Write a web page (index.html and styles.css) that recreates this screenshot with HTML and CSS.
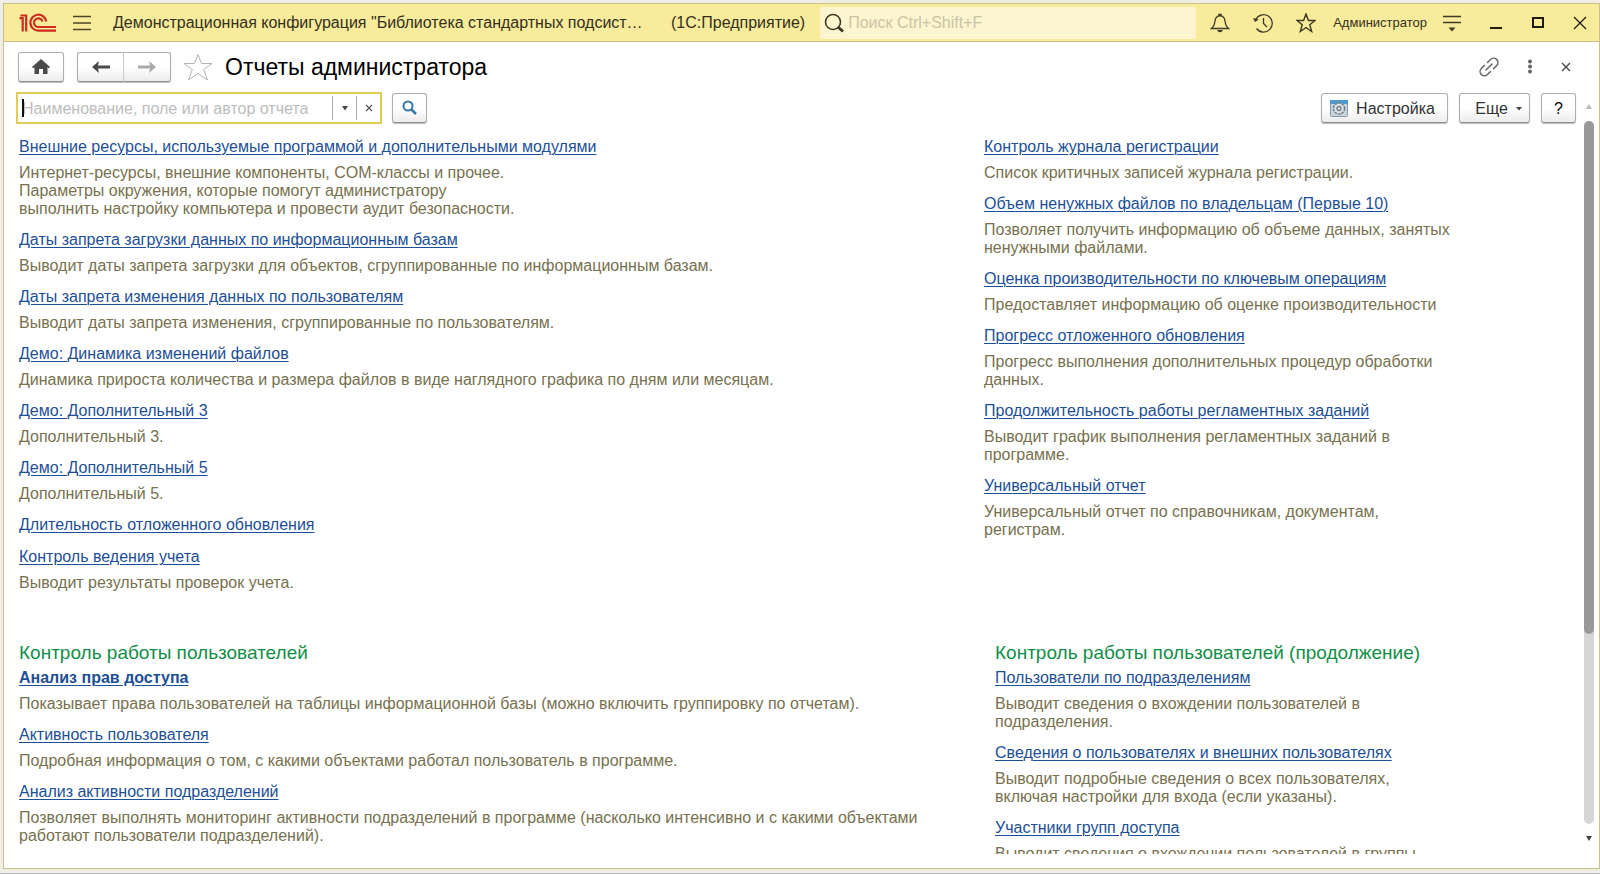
FILE: index.html
```html
<!DOCTYPE html>
<html lang="ru">
<head>
<meta charset="utf-8">
<title>Отчеты администратора</title>
<link rel="stylesheet" href="styles.css">
</head>
<body>
<div class="window">
  <header class="titlebar">
    <svg class="logo" width="38" height="20" viewBox="0 0 38 20" role="img" aria-label="1С" fill="none" stroke="#cb2d21" stroke-width="2.200">
      <path d="M.5 5.200H3.700V18.500M1.500 2.500H7.200V18.500" />
      <path d="M27.300 8.500A8 8 0 1 0 19.500 17.700H37"/>
      <path d="M23.500 8.500A4.300 4.300 0 1 0 19.500 14H37"/>
    </svg>
    <button class="icon-btn menu" aria-label="Меню"><svg width="18" height="16" viewBox="0 0 18 16" stroke="#4c4626" stroke-width="1.500"><path d="M0 1.500H18M0 8H18M0 14.500H18"/></svg></button>
    <span class="app-name">Демонстрационная конфигурация "Библиотека стандартных подсистем"</span>
    <span class="app-kind">(1С:Предприятие)</span>
    <label class="global-search">
      <svg width="20" height="20" viewBox="0 0 20 20" fill="none" stroke="#3d3a22"><circle cx="9" cy="9" r="7.500" stroke-width="1.600"/><path d="M14 14 19 18.500" stroke-width="3"/></svg>
      <input type="search" placeholder="Поиск Ctrl+Shift+F" aria-label="Поиск">
    </label>
    <nav class="tools">
      <button class="icon-btn" aria-label="Уведомления"><svg width="20" height="20" viewBox="0 0 20 20" fill="none" stroke="#3d3a22" stroke-width="1.300"><path d="M1.500 15.500C4 13.500 4.500 12 5 8C5.300 5 7 2.800 10 2.800S14.700 5 15 8C15.500 12 16 13.500 18.500 15.500ZM9 2.800V1.500H11V2.800"/><path d="M7 17H13Q12 19.300 10 19.300T7 17Z" fill="#3d3a22" stroke="none"/></svg></button>
      <button class="icon-btn" aria-label="История"><svg width="20" height="20" viewBox="0 0 20 20" fill="none" stroke="#3d3a22" stroke-width="1.300"><path d="M2.500 7A8.700 8.700 0 1 1 3.500 15.500M10.500 5V10.500L14 14"/><path d="M0 5 2 9 5.800 6.500Z" fill="#3d3a22" stroke="none"/></svg></button>
      <button class="icon-btn" aria-label="Избранное"><svg width="20" height="20" viewBox="0 0 20 20" fill="none" stroke="#3d3a22" stroke-width="1.400"><path d="M10 1 12.400 7.500H19L13.800 11.700 15.700 18.500 10 14.500 4.300 18.500 6.200 11.700 1 7.500H7.600Z"/></svg></button>
      <a class="user" href="#">Администратор</a>
      <button class="icon-btn" aria-label="Сервис"><svg width="18" height="20" viewBox="0 0 18 20" stroke="#3d3a22" stroke-width="1.500"><path d="M0 3.500H18M0 9.500H18"/><path d="M5.500 14.500H12.500L9 18.500Z" fill="#3d3a22" stroke="none"/></svg></button>
    </nav>
    <div class="win-buttons">
      <button class="icon-btn" aria-label="Свернуть"><svg width="14" height="14" viewBox="0 0 14 14" stroke="#1f1d10" stroke-width="2"><path d="M1 12H13"/></svg></button>
      <button class="icon-btn" aria-label="Развернуть"><svg width="14" height="14" viewBox="0 0 14 14" fill="none" stroke="#1f1d10" stroke-width="2"><path d="M2 2H12V11H2Z"/></svg></button>
      <button class="icon-btn" aria-label="Закрыть"><svg width="14" height="14" viewBox="0 0 14 14" stroke="#1f1d10" stroke-width="1.300"><path d="M1 1 13 13M13 1 1 13"/></svg></button>
    </div>
  </header>

  <div class="form-head">
    <button class="btn home" aria-label="Начальная страница"><svg width="18" height="16" viewBox="0 0 18 16" fill="#4a4a4a"><path d="M9 0 18 8 16.800 9.300 15.500 8.200V15H11V10H7V15H2.500V8.200L1.200 9.300 0 8Z"/></svg></button>
    <div class="nav-pair">
      <button class="btn" aria-label="Назад"><svg width="18" height="12" viewBox="0 0 18 12"><path d="M0 6 7 0 6 4.500H18V7.500H6L7 12Z" fill="#4a4a4a"/></svg></button>
      <button class="btn" aria-label="Вперед" disabled><svg width="18" height="12" viewBox="0 0 18 12"><path d="M18 6 11 0 12 4.500H0V7.500H12L11 12Z" fill="#aaa"/></svg></button>
    </div>
    <button class="icon-btn" aria-label="Добавить в избранное"><svg width="30" height="28" viewBox="0 0 30 28" fill="none" stroke="#b4b4b4"><path d="M15 1.500 18.500 10.500H29L20.700 16.500 24.500 27 15 20.500 5.500 27 9.300 16.500 1 10.500H11.500Z"/></svg></button>
    <h1>Отчеты администратора</h1>
    <div class="form-tools">
      <button class="icon-btn" aria-label="Получить ссылку"><svg width="20" height="20" viewBox="0 0 20 20" fill="none" stroke="#666" stroke-width="1.500" stroke-linecap="round"><path d="M8.500 5.500 11.500 2.500A4.200 4.200 0 0 1 17.700 8.500L14.500 11.700M11.500 14.500 8.500 17.500A4.200 4.200 0 0 1 2.300 11.500L5.500 8.300M7 13 13 7"/></svg></button>
      <button class="icon-btn" aria-label="Действия"><svg width="6" height="16" viewBox="0 0 6 16" fill="#666"><circle cx="3" cy="2.500" r="2"/><circle cx="3" cy="7.500" r="2"/><circle cx="3" cy="12.500" r="2"/></svg></button>
      <button class="icon-btn" aria-label="Закрыть форму"><svg width="10" height="10" viewBox="0 0 10 10" stroke="#444" stroke-width="1.300"><path d="M1 1 9 9M9 1 1 9"/></svg></button>
    </div>
  </div>

  <div class="body">
    <main class="form">
      <div class="commands">
        <div class="report-search">
          <input type="text" placeholder="Наименование, поле или автор отчета" aria-label="Поиск отчета" autofocus>
          <span class="caret"></span>
          <button aria-label="Выбрать из списка"><svg width="6" height="5" viewBox="0 0 6 5" fill="#444"><path d="M0 0H6L3 4.500Z"/></svg></button>
          <button aria-label="Очистить"><svg width="8" height="8" viewBox="0 0 8 8" stroke="#555" stroke-width="1.200"><path d="M1 1 7 7M7 1 1 7"/></svg></button>
        </div>
        <button class="btn find" aria-label="Найти"><svg width="16" height="16" viewBox="0 0 16 16" fill="none" stroke="#3577a8"><circle cx="6" cy="6" r="4.500" stroke-width="2"/><path d="M9.500 9.500 14 14" stroke-width="2.500"/></svg></button>
        <div class="right-commands">
          <button class="btn settings"><svg width="18" height="17" viewBox="0 0 18 17" fill="none"><rect x=".5" y=".5" width="17" height="16" rx="1" fill="#c9d3da" stroke="#8799a6"/><path d="M0 0H18V4H0Z" fill="#4f9bd0"/><circle cx="9" cy="8.500" r="5.500" fill="#dfe4e7" stroke="#6d7c87" stroke-width="1.500" stroke-dasharray="2.500 1"/><circle cx="9" cy="8.500" r="2" stroke="#6d7c87" stroke-width="1.300"/></svg>Настройка</button>
          <button class="btn more">Еще<svg width="6" height="4" viewBox="0 0 6 4" fill="#444"><path d="M0 0H6L3 3.500Z"/></svg></button>
          <button class="btn help">?</button>
        </div>
      </div>

      <div class="reports">
        <section class="group">
          <ul class="list">
            <li><a href="#">Внешние ресурсы, используемые программой и дополнительными модулями</a><p>Интернет-ресурсы, внешние компоненты, COM-классы и прочее.<br>Параметры окружения, которые помогут администратору<br>выполнить настройку компьютера и провести аудит безопасности.</p></li>
            <li><a href="#">Даты запрета загрузки данных по информационным базам</a><p>Выводит даты запрета загрузки для объектов, сгруппированные по информационным базам.</p></li>
            <li><a href="#">Даты запрета изменения данных по пользователям</a><p>Выводит даты запрета изменения, сгруппированные по пользователям.</p></li>
            <li><a href="#">Демо: Динамика изменений файлов</a><p>Динамика прироста количества и размера файлов в виде наглядного графика по дням или месяцам.</p></li>
            <li><a href="#">Демо: Дополнительный 3</a><p>Дополнительный 3.</p></li>
            <li><a href="#">Демо: Дополнительный 5</a><p>Дополнительный 5.</p></li>
            <li><a href="#">Длительность отложенного обновления</a></li>
            <li><a href="#">Контроль ведения учета</a><p>Выводит результаты проверок учета.</p></li>
          </ul>
          <ul class="list narrow">
            <li><a href="#">Контроль журнала регистрации</a><p>Список критичных записей журнала регистрации.</p></li>
            <li><a href="#">Объем ненужных файлов по владельцам (Первые 10)</a><p>Позволяет получить информацию об объеме данных, занятых ненужными файлами.</p></li>
            <li><a href="#">Оценка производительности по ключевым операциям</a><p>Предоставляет информацию об оценке производительности</p></li>
            <li><a href="#">Прогресс отложенного обновления</a><p>Прогресс выполнения дополнительных процедур обработки данных.</p></li>
            <li><a href="#">Продолжительность работы регламентных заданий</a><p>Выводит график выполнения регламентных заданий в программе.</p></li>
            <li><a href="#">Универсальный отчет</a><p>Универсальный отчет по справочникам, документам, регистрам.</p></li>
          </ul>
        </section>
        <section class="group users">
          <div>
            <h2>Контроль работы пользователей</h2>
            <ul class="list">
              <li><a class="main" href="#">Анализ прав доступа</a><p>Показывает права пользователей на таблицы информационной базы (можно включить группировку по отчетам).</p></li>
              <li><a href="#">Активность пользователя</a><p>Подробная информация о том, с какими объектами работал пользователь в программе.</p></li>
              <li><a href="#">Анализ активности подразделений</a><p>Позволяет выполнять мониторинг активности подразделений в программе (насколько интенсивно и с какими объектами работают пользователи подразделений).</p></li>
            </ul>
          </div>
          <div>
            <h2>Контроль работы пользователей (продолжение)</h2>
            <ul class="list narrow">
              <li><a href="#">Пользователи по подразделениям</a><p>Выводит сведения о вхождении пользователей в подразделения.</p></li>
              <li><a href="#">Сведения о пользователях и внешних пользователях</a><p>Выводит подробные сведения о всех пользователях, включая настройки для входа (если указаны).</p></li>
              <li><a href="#">Участники групп доступа</a><p>Выводит сведения о вхождении пользователей в группы</p></li>
            </ul>
          </div>
        </section>
      </div>
    </main>
    <div class="scrollbar" aria-hidden="true">
      <svg width="6" height="5" viewBox="0 0 6 5" fill="#bbb"><path d="M0 5H6L3 0Z"/></svg>
      <div class="track"><div class="thumb"></div></div>
      <svg width="6" height="5" viewBox="0 0 6 5" fill="#444"><path d="M0 0H6L3 5Z"/></svg>
    </div>
  </div>
</div>
</body>
</html>
```

FILE: styles.css
```css
* { box-sizing: border-box; }

body {
  margin: 0;
  height: 100vh;
  padding: 3px 0 4px 3px;
  background: #efede4;
  border-bottom: 1px solid #bfbfbf;
  font: 16px/19px "Liberation Sans", Arial, sans-serif;
  color: #333;
  overflow: hidden;
}

button, input { font: inherit; color: inherit; }
h1, h2, p, ul { margin: 0; padding: 0; font-weight: 400; }

.window {
  display: flex;
  flex-direction: column;
  height: 100%;
  background: #fff;
  border: 1px solid #c9c08a;
}

.titlebar {
  display: flex;
  align-items: center;
  height: 38px;
  flex: none;
  padding: 0 12px 0 15px;
  background: #f9eb9c;
  border-bottom: 1px solid #c9c08a;
  color: #33301a;
}

.icon-btn {
  display: flex;
  align-items: center;
  justify-content: center;
  padding: 0;
  border: 0;
  background: none;
}

.menu { margin: 0 22px 0 16px; }
.app-name {
  width: 538px;
  overflow: hidden;
  text-overflow: ellipsis;
  white-space: nowrap;
}
.app-kind { margin: 0 15px 0 20px; }

.global-search {
  display: flex;
  align-items: center;
  gap: 4px;
  flex: 1;
  height: 32px;
  padding: 0 4px;
  border-radius: 3px;
  background: #fdf5cf;
}
.global-search input {
  flex: 1;
  min-width: 0;
  padding: 0;
  border: 0;
  background: none;
  outline: 0;
}
.global-search input::placeholder { color: #c9c4a6; }

.tools { display: flex; align-items: center; gap: 23px; margin: 0 28px 0 14px; }
.user { margin: 0 -7px 0 -6px; color: inherit; font-size: 13px; text-decoration: none; }
.win-buttons { display: flex; gap: 28px; }

.form-head {
  display: flex;
  align-items: center;
  flex: none;
  height: 50px;
  padding: 0 28px 0 14px;
}

.btn {
  display: flex;
  align-items: center;
  justify-content: center;
  height: 30px;
  padding: 0;
  border: 1px solid #adadad;
  border-bottom-color: #8f8f8f;
  border-radius: 3px;
  background: linear-gradient(#fff 50%, #ececec);
  box-shadow: 0 1px 1px #bbb;
}
.home { width: 46px; margin-right: 13px; }
.nav-pair { display: flex; margin-right: 12px; }
.nav-pair .btn { width: 47px; }
.nav-pair .btn:first-child { border-radius: 3px 0 0 3px; border-right-color: #ccc; }
.nav-pair .btn:last-child { border-radius: 0 3px 3px 0; border-left: 0; }
h1 { margin-left: 12px; color: #000; font-size: 23px; line-height: 28px; }
.form-tools { display: flex; align-items: center; gap: 28px; margin-left: auto; }

.body { display: flex; flex: 1; min-height: 0; }
.form {
  display: flex;
  flex-direction: column;
  flex: 1;
  min-width: 0;
  padding: 0 6px 14px 12px;
}

.commands { display: flex; align-items: center; flex: none; height: 32px; }
.report-search {
  display: flex;
  position: relative;
  width: 366px;
  height: 32px;
  margin-right: 10px;
  padding: 2px 0;
  border: 2px solid #e3cd57;
  background: #fff;
}
.report-search input {
  flex: 1;
  min-width: 0;
  padding: 0 4px;
  border: 0;
  outline: 0;
  background: none;
  caret-color: transparent;
}
.report-search input::placeholder { color: #bdbdbd; }
.caret {
  position: absolute;
  left: 4px;
  top: 5px;
  width: 2px;
  height: 18px;
  background: #111;
}
.report-search button {
  display: flex;
  align-items: center;
  justify-content: center;
  width: 24px;
  padding: 0;
  border: 0;
  border-left: 1px solid #aaa;
  background: none;
}
.find { width: 35px; }
.right-commands { display: flex; gap: 11px; margin-left: auto; }
.settings { gap: 8px; width: 127px; padding-right: 4px; }
.more { gap: 8px; width: 71px; padding-left: 8px; }
.more svg { margin-top: 2px; }
.help { width: 35px; color: #000; }

.reports { flex: 1; min-height: 0; padding: 13px 0 0 3px; overflow: hidden; }
.group {
  display: grid;
  grid-template-columns: 965fr 592fr;
}
.users { grid-template-columns: 976fr 581fr; margin-top: 34px; }
.group .list { max-width: 920px; }
.group .narrow { max-width: 472px; }
.users .narrow { max-width: 440px; }

.list { list-style: none; }
.list li { padding-bottom: 12px; line-height: 20px; }
.list a {
  color: #1d4f97;
  text-decoration: underline;
  text-decoration-thickness: 1px;
  text-underline-offset: 2px;
}
.list .main { font-weight: 700; }
.list p { padding-top: 7px; color: #77714f; line-height: 18px; }
h2 { color: #128e48; font-size: 19px; line-height: 30px; }

.scrollbar {
  display: flex;
  flex-direction: column;
  align-items: center;
  gap: 12px;
  width: 17px;
  padding: 12px 3px 27px 0;
}
.track { flex: 1; width: 10px; border-radius: 5px; background: #d6d6d6; }
.thumb { height: 73%; border-radius: 5px; background: #999; }
```
